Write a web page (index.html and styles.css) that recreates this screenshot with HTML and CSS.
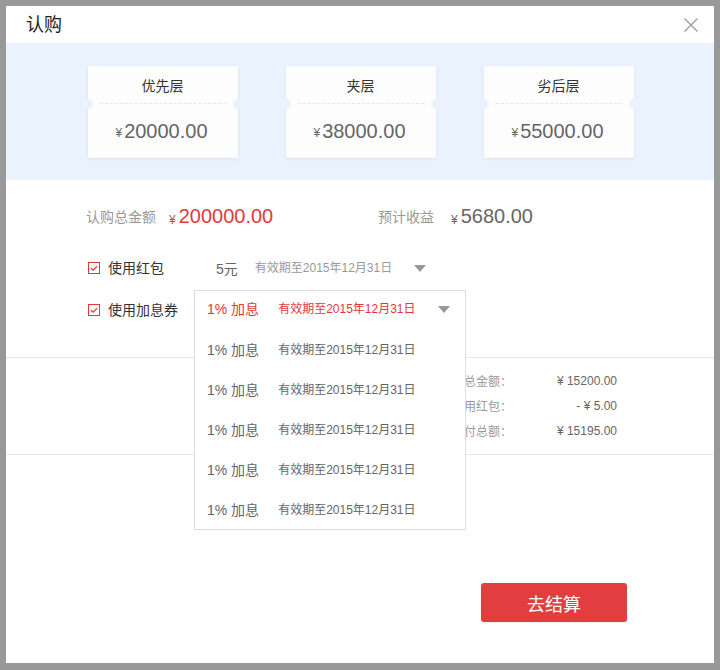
FILE: index.html
```html
<!DOCTYPE html>
<html lang="zh-CN">
<head>
<meta charset="utf-8">
<title>认购</title>
<link rel="stylesheet" href="styles.css">
</head>
<body>
<div class="dialog">
  <div class="dialog-header">
    <h1 class="dialog-title">认购</h1>
    <svg class="close" width="14" height="14" viewBox="0 0 14 14"><path d="M0.5 0.5L13.5 13.5M13.5 0.5L0.5 13.5" stroke="#999" stroke-width="1.2" fill="none"/></svg>
  </div>

  <div class="tiers">
    <div class="tier">
      <div class="tier-name">优先层</div>
      <div class="tier-amount"><span class="yen">¥</span>20000.00</div>
    </div>
    <div class="tier">
      <div class="tier-name">夹层</div>
      <div class="tier-amount"><span class="yen">¥</span>38000.00</div>
    </div>
    <div class="tier">
      <div class="tier-name">劣后层</div>
      <div class="tier-amount"><span class="yen">¥</span>55000.00</div>
    </div>
  </div>

  <div class="form">
    <div class="totals">
      <div class="total-group">
        <span class="total-label">认购总金额</span>
        <span class="total-value red"><span class="yen">¥</span>200000.00</span>
      </div>
      <div class="total-group">
        <span class="total-label">预计收益</span>
        <span class="total-value gray"><span class="yen">¥</span>5680.00</span>
      </div>
    </div>

    <div class="option-row row-bonus">
      <span class="checkbox"><svg width="12" height="12" viewBox="0 0 12 12"><rect x="0.5" y="0.5" width="11" height="11" fill="#fff" stroke="#e4393c"/><path d="M3 6.2L5.1 8.2L9 4.2" stroke="#e4393c" stroke-width="1.3" fill="none"/></svg></span>
      <span class="option-label">使用红包</span>
      <div class="static-select">
        <span class="amount">5元</span>
        <span class="date">有效期至2015年12月31日</span>
        <span class="caret"></span>
      </div>
    </div>

    <div class="option-row row-ticket">
      <span class="checkbox"><svg width="12" height="12" viewBox="0 0 12 12"><rect x="0.5" y="0.5" width="11" height="11" fill="#fff" stroke="#e4393c"/><path d="M3 6.2L5.1 8.2L9 4.2" stroke="#e4393c" stroke-width="1.3" fill="none"/></svg></span>
      <span class="option-label">使用加息券</span>
      <div class="select">
        <div class="select-current">
          <span class="rate">1% 加息</span>
          <span class="date">有效期至2015年12月31日</span>
          <span class="caret"></span>
        </div>
        <ul class="select-menu">
          <li><span class="rate">1% 加息</span><span class="date">有效期至2015年12月31日</span></li>
          <li><span class="rate">1% 加息</span><span class="date">有效期至2015年12月31日</span></li>
          <li><span class="rate">1% 加息</span><span class="date">有效期至2015年12月31日</span></li>
          <li><span class="rate">1% 加息</span><span class="date">有效期至2015年12月31日</span></li>
          <li><span class="rate">1% 加息</span><span class="date">有效期至2015年12月31日</span></li>
        </ul>
      </div>
    </div>
  </div>

  <div class="summary">
    <div class="summary-grid">
      <span class="s-label">认购总金额：</span><span class="s-value">¥ 15200.00</span>
      <span class="s-label">使用红包：</span><span class="s-value">- ¥ 5.00</span>
      <span class="s-label">实付总额：</span><span class="s-value">¥ 15195.00</span>
    </div>
  </div>

  <div class="footer">
    <button class="submit">去结算</button>
  </div>
</div>
</body>
</html>
```

FILE: styles.css
```css
* { box-sizing: border-box; }
html, body { margin: 0; padding: 0; }
body {
  background: #999;
  padding: 6px 6px 7px 6px;
  font-family: "Liberation Sans", "Noto Sans CJK SC", sans-serif;
  color: #333;
}
.dialog {
  width: 708px;
  height: 657px;
  background: #fff;
  position: relative;
}
.dialog-header {
  height: 37px;
  display: flex;
  align-items: center;
  justify-content: space-between;
  padding: 0 16px 0 20px;
}
.dialog-title {
  margin: 0;
  font-size: 18px;
  font-weight: normal;
  line-height: 24px;
  color: #222;
}
.close { display: block; margin-top: 1px; }

.tiers {
  height: 137px;
  background: #eaf2fd;
  display: flex;
  justify-content: center;
  gap: 48px;
  padding-top: 23px;
  padding-left: 1px;
}
.tier {
  width: 150px;
  height: 92px;
  background: #fdfdfd;
  box-shadow: 0 1px 3px rgba(0, 0, 0, 0.08);
  position: relative;
}
.tier::before, .tier::after {
  content: "";
  position: absolute;
  top: 33px;
  width: 10px;
  height: 10px;
  border-radius: 50%;
  background: #eaf2fd;
}
.tier::before { left: -5px; }
.tier::after { right: -5px; }
.tier-name {
  height: 38px;
  line-height: 40px;
  text-align: center;
  font-size: 14px;
  color: #333;
  margin: 0 12px;
  border-bottom: 1px dashed #e6e6e6;
}
.tier-amount {
  height: 54px;
  display: flex;
  align-items: center;
  justify-content: center;
  font-size: 20px;
  color: #666;
  padding-right: 2px;
}
.yen {
  font-size: 12px;
  margin-right: 2px;
  position: relative;
  top: 2px;
}

.form {
  padding: 24px 0 27px 0;
  border-bottom: 1px solid #e8e8e8;
}
.totals {
  display: flex;
  height: 26px;
  align-items: center;
  padding-left: 80px;
}
.total-group {
  display: flex;
  align-items: center;
}
.total-group:first-child { width: 292px; }
.total-label {
  font-size: 14px;
  color: #999;
  line-height: 20px;
}
.total-value {
  font-size: 20px;
  line-height: 26px;
  margin-left: 13px;
}
.total-group:last-child .total-value { margin-left: 17px; }
.total-value .yen { top: 1px; margin-right: 3px; }
.red { color: #e4393c; }
.gray { color: #666; }

.option-row {
  display: flex;
  align-items: center;
  padding-left: 82px;
}
.row-bonus { height: 36px; margin-top: 20px; }
.row-ticket { height: 40px; margin-top: 4px; }
.checkbox { display: flex; width: 12px; height: 12px; }
.option-label {
  width: 86px;
  margin-left: 8px;
  font-size: 14px;
  line-height: 20px;
  color: #333;
}
.static-select {
  width: 232px;
  display: flex;
  align-items: center;
  padding-left: 22px;
}
.static-select .amount {
  font-size: 14px;
  color: #666;
}
.date {
  font-size: 12px;
  color: #999;
  margin-left: 17px;
  line-height: 18px;
}
.caret {
  margin-left: auto;
  width: 0;
  height: 0;
  border-left: 6px solid transparent;
  border-right: 6px solid transparent;
  border-top: 7px solid #999;
}

.select {
  position: relative;
  width: 272px;
  height: 40px;
  border: 1px solid #ddd;
  z-index: 2;
}
.select-current {
  height: 38px;
  display: flex;
  align-items: center;
  padding: 0 15px 2px 12px;
}
.rate {
  font-size: 14px;
  color: #666;
  line-height: 20px;
}
.select .date { margin-left: 19px; color: #666; }
.select-current .rate,
.select-current .date { color: #e4393c; }
.select-menu {
  list-style: none;
  margin: 0;
  padding: 0;
  position: absolute;
  top: 38px;
  left: -1px;
  right: -1px;
  background: #fff;
  border: 1px solid #ddd;
  border-top: none;
}
.select-menu li {
  height: 40px;
  display: flex;
  align-items: center;
  padding: 2px 0 0 12px;
}

.summary {
  padding: 10px 97px 11px 0;
  border-bottom: 1px solid #e8e8e8;
  display: flex;
  justify-content: flex-end;
}
.summary-grid {
  display: grid;
  grid-template-columns: auto 105px;
  grid-auto-rows: 25px;
  align-items: center;
  font-size: 12px;
}
.s-label { color: #999; text-align: right; }
.s-value { color: #666; text-align: right; }

.footer {
  display: flex;
  justify-content: flex-end;
  padding: 128px 87px 0 0;
}
.submit {
  width: 146px;
  height: 39px;
  border: none;
  border-radius: 3px;
  background: #e23e40;
  color: #fff;
  font-family: "Noto Sans CJK SC", sans-serif;
  font-size: 18px;
  line-height: 24px;
  padding: 0;
  box-shadow: 0 1px 2px rgba(0, 0, 0, 0.08);
}
```
